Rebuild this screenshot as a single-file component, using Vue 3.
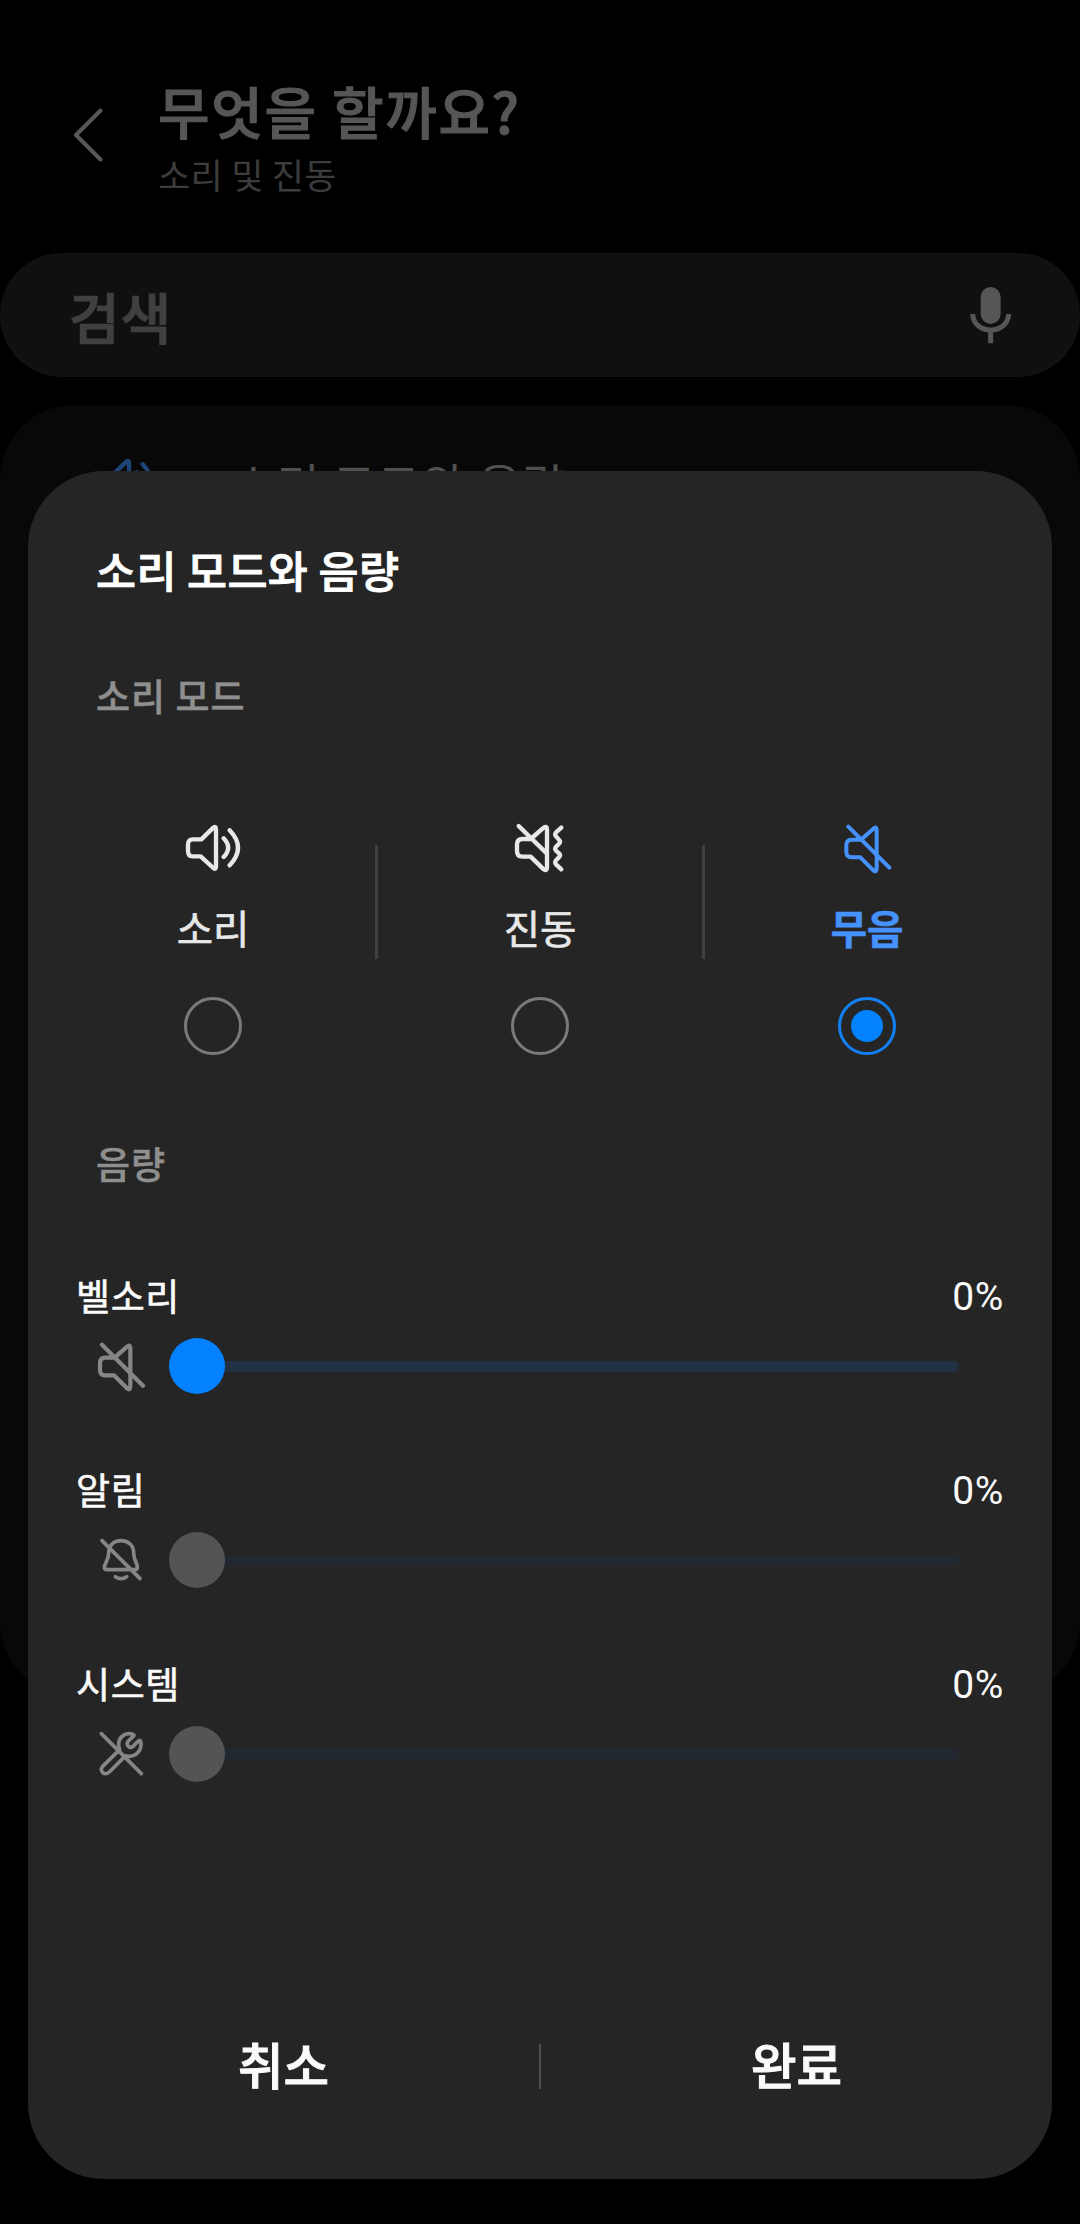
<script setup>
const modes = [
  { id: 'sound', label: '소리', box: '99 66 180 156' },
  { id: 'vibrate', label: '진동', box: '90 66 180 156' },
  { id: 'mute', label: '무음', box: '111 66 180 156' },
]
const selected = 'mute'

const volumes = [
  { id: 'ring', label: '벨소리', value: 0, enabled: true, box: '112 66 180 156' },
  { id: 'notify', label: '알림', value: 0, enabled: false, box: '93 253 180 156' },
  { id: 'system', label: '시스템', value: 0, enabled: false, box: '93 835 180 156' },
]
</script>

<template>
  <div class="screen">
    <header class="header">
      <svg class="back" viewBox="0 0 40 60" width="40" height="60">
        <path d="M31.5 5.5 7 30 31.5 54.5" />
      </svg>
      <div>
        <h1>무엇을 할까요?</h1>
        <p>소리 및 진동</p>
      </div>
    </header>

    <div class="search">
      <span>검색</span>
      <svg viewBox="262 135 136 180" width="45.33" height="60">
        <rect x="300" y="141" width="60" height="111" rx="30" fill="#565656" />
        <path d="M276 222C278 286 382 286 384 222M330 270V310" fill="none" stroke="#565656" stroke-width="15" />
      </svg>
    </div>

    <div class="card">
      <div class="card-row">
        <svg class="line-icon" viewBox="99 66 180 156" width="60" height="52">
          <path d="M128 118H154L190 83Q198 77 198 88V200Q198 210 190 204L152 169H128Q114 169 114 152V134Q114 118 128 118Z" />
          <path d="M221 115Q248 143 221 171M239 91Q289 143 239 196" />
        </svg>
        <span>소리 모드와 음량</span>
      </div>
    </div>

    <section class="dialog">
      <h2>소리 모드와 음량</h2>
      <h3>소리 모드</h3>

      <div class="modes">
        <div v-for="m in modes" :key="m.id" class="mode" :class="{ active: m.id === selected }">
          <svg class="line-icon" :viewBox="m.box" width="60" height="52">
            <template v-if="m.id === 'sound'">
              <path d="M128 118H154L190 83Q198 77 198 88V200Q198 210 190 204L152 169H128Q114 169 114 152V134Q114 118 128 118Z" />
              <path d="M221 115Q248 143 221 171M239 91Q289 143 239 196" />
            </template>
            <template v-else-if="m.id === 'vibrate'">
              <path d="M152 117 191 83Q201 76 201 88V202Q201 215 191 208L152 170H127Q111 170 111 153V134Q111 117 127 117ZM116 78 200 160" />
              <path d="M244 83 228 97Q223 103 228 109L237 119Q243 125 237 131L228 140Q223 146 228 152L237 160Q243 166 237 172L228 181Q223 187 228 193L244 208" />
            </template>
            <path v-else d="M183 119 220 86Q230 78 230 90V205Q230 219 220 211L181 172H155Q139 172 139 156V136Q139 119 155 119ZM145 80 268 203" />
          </svg>
          <span class="mode-label">{{ m.label }}</span>
          <span class="radio"></span>
        </div>
      </div>

      <h3 class="volume-title">음량</h3>

      <div v-for="v in volumes" :key="v.id" class="volume" :class="{ off: !v.enabled }">
        <div class="volume-head">
          <span>{{ v.label }}</span>
          <span class="percent">{{ v.value }}%</span>
        </div>
        <div class="slider">
          <svg class="line-icon" :viewBox="v.box" width="60" height="52">
            <path v-if="v.id === 'ring'" d="M183 119 220 86Q230 78 230 90V205Q230 219 220 211L181 172H155Q139 172 139 156V136Q139 119 155 119ZM145 80 268 203" />
            <template v-else-if="v.id === 'notify'">
              <path d="M183 273C205 273 221 288 221 309C221 335 232 338 232 352Q232 360 224 360H142Q133 360 133 352C133 342 146 334 146 309C146 288 161 273 183 273ZM126 273 240 387" />
              <path d="M166 381Q183 393 200 381" />
            </template>
            <template v-else>
              <path d="M221 855C199 845 176 861 176 884Q176 894 179 900L128 950C116 964 134 980 148 967L197 918C223 926 245 906 243 880Q241 867 234 875L219 890Q212 896 205 890Q198 882 205 874L219 861Q224 857 221 855Z" />
              <path d="M124 852 244 972" />
            </template>
          </svg>
          <div class="rail">
            <span class="thumb"></span>
            <span class="track"></span>
          </div>
        </div>
      </div>

      <footer class="actions">
        <button>취소</button>
        <i></i>
        <button>완료</button>
      </footer>
    </section>
  </div>
</template>

<style>
body {
  margin: 0;
  background: #000;
}
</style>

<style scoped>
.screen {
  position: relative;
  width: 1080px;
  height: 2224px;
  overflow: hidden;
  background: #000;
  font-family: "Noto Sans CJK KR", sans-serif;
}
h1, h2, h3, p {
  margin: 0;
}
.header {
  display: flex;
  align-items: flex-start;
  height: 173px;
  padding: 80px 0 0 69px;
}
.back {
  margin: 25px 49px 0 0;
  fill: none;
  stroke: #575757;
  stroke-width: 4;
  stroke-linecap: round;
  stroke-linejoin: round;
}
h1 {
  font-size: 56px;
  line-height: 60px;
  font-weight: 500;
  letter-spacing: 1.7px;
  color: #565656;
  -webkit-text-stroke: 1.2px #565656;
}
.header p {
  margin: 14px 0 0;
  font-size: 35px;
  line-height: 40px;
  letter-spacing: 0.3px;
  color: #3c3c3c;
}
.search {
  display: flex;
  align-items: center;
  justify-content: space-between;
  box-sizing: border-box;
  height: 124px;
  padding: 0 67px 0 69px;
  border-radius: 62px;
  background: #101010;
}
.search span {
  font-size: 55px;
  line-height: 60px;
  font-weight: 500;
  letter-spacing: 1px;
  color: #404040;
  -webkit-text-stroke: 1.2px #404040;
}
.card {
  height: 1291px;
  margin-top: 28px;
  border-radius: 74px;
  background: #080808;
}
.card-row {
  display: flex;
  gap: 76px;
  padding: 50px 0 0 96px;
  color: #505050;
  font-size: 47px;
  line-height: 56px;
  letter-spacing: 1.2px;
}
.card-row .line-icon {
  margin-top: 1px;
  color: #1d4578;
}
.line-icon {
  flex: none;
  fill: none;
  stroke: currentColor;
  stroke-width: 13;
  stroke-linecap: round;
  stroke-linejoin: round;
}
.dialog {
  position: absolute;
  left: 28px;
  top: 471px;
  display: flex;
  flex-direction: column;
  box-sizing: border-box;
  width: 1024px;
  height: 1708px;
  padding-top: 69px;
  border-radius: 76px;
  background: #252525;
}
h2 {
  margin-left: 68px;
  font-size: 43.5px;
  line-height: 60px;
  font-weight: 500;
  letter-spacing: 0.4px;
  color: #fff;
  -webkit-text-stroke: 0.9px #fff;
}
h3 {
  margin: 70px 0 0 68px;
  font-size: 37px;
  line-height: 50px;
  font-weight: 500;
  letter-spacing: 1px;
  color: #8f8f8f;
  -webkit-text-stroke: 0.5px #8f8f8f;
}
.modes {
  display: flex;
  margin: 102px 21.5px 0;
}
.mode {
  position: relative;
  display: flex;
  flex: 1;
  flex-direction: column;
  align-items: center;
  color: #e8e8e8;
}
.mode + .mode::before {
  content: "";
  position: absolute;
  left: -1.5px;
  top: 23px;
  width: 3px;
  height: 114px;
  background: #404040;
}
.mode-label {
  margin-top: 25px;
  font-size: 39.5px;
  line-height: 56px;
  -webkit-text-stroke: 0.6px currentColor;
}
.radio {
  display: flex;
  align-items: center;
  justify-content: center;
  box-sizing: border-box;
  width: 58px;
  height: 58px;
  margin-top: 42px;
  border: 3px solid #7a7a7a;
  border-radius: 50%;
}
.active {
  color: #4592fd;
}
.active .line-icon {
  stroke-width: 12;
}
.active .mode-label {
  font-weight: 700;
}
.active .radio {
  border-color: #1280f4;
}
.active .radio::after {
  content: "";
  width: 32px;
  height: 32px;
  border-radius: 50%;
  background: #0381fe;
}
.volume-title {
  margin: 83px 0 82px 68px;
}
.volume {
  height: 194px;
}
.volume-head {
  display: flex;
  justify-content: space-between;
  padding: 0 48px 0 48px;
  font-size: 37px;
  line-height: 50px;
  letter-spacing: 0.6px;
  color: #fafafa;
  -webkit-text-stroke: 0.6px #fafafa;
}
.percent {
  padding-top: 2px;
  font-family: Roboto, sans-serif;
  font-size: 39px;
  -webkit-text-stroke: 0;
}
.slider {
  display: flex;
  align-items: center;
  gap: 18px;
  margin-top: 16px;
  padding: 0 93px 0 63px;
  color: #868686;
}
.slider .line-icon {
  stroke-width: 12.5;
}
.off .line-icon {
  stroke-width: 11;
}
.rail {
  display: flex;
  flex: 1;
  align-items: center;
  height: 56px;
}
.thumb {
  z-index: 1;
  width: 56px;
  height: 56px;
  border-radius: 50%;
  background: #0381fe;
}
.track {
  flex: 1;
  height: 11px;
  margin-left: -28px;
  border-radius: 6px;
  background: #213143;
}
.off .thumb {
  background: #545454;
}
.off .track {
  background: #22282f;
}
.actions {
  display: flex;
  align-items: center;
  height: 70px;
  margin-top: auto;
  margin-bottom: 80px;
}
.actions button {
  flex: 1;
  padding: 0;
  border: 0;
  background: none;
  color: #fafafa;
  font: 500 49.5px/70px "Noto Sans CJK KR", sans-serif;
  -webkit-text-stroke: 1px #fafafa;
}
.actions i {
  width: 2px;
  height: 45px;
  margin-top: 4px;
  background: #505050;
}
</style>
